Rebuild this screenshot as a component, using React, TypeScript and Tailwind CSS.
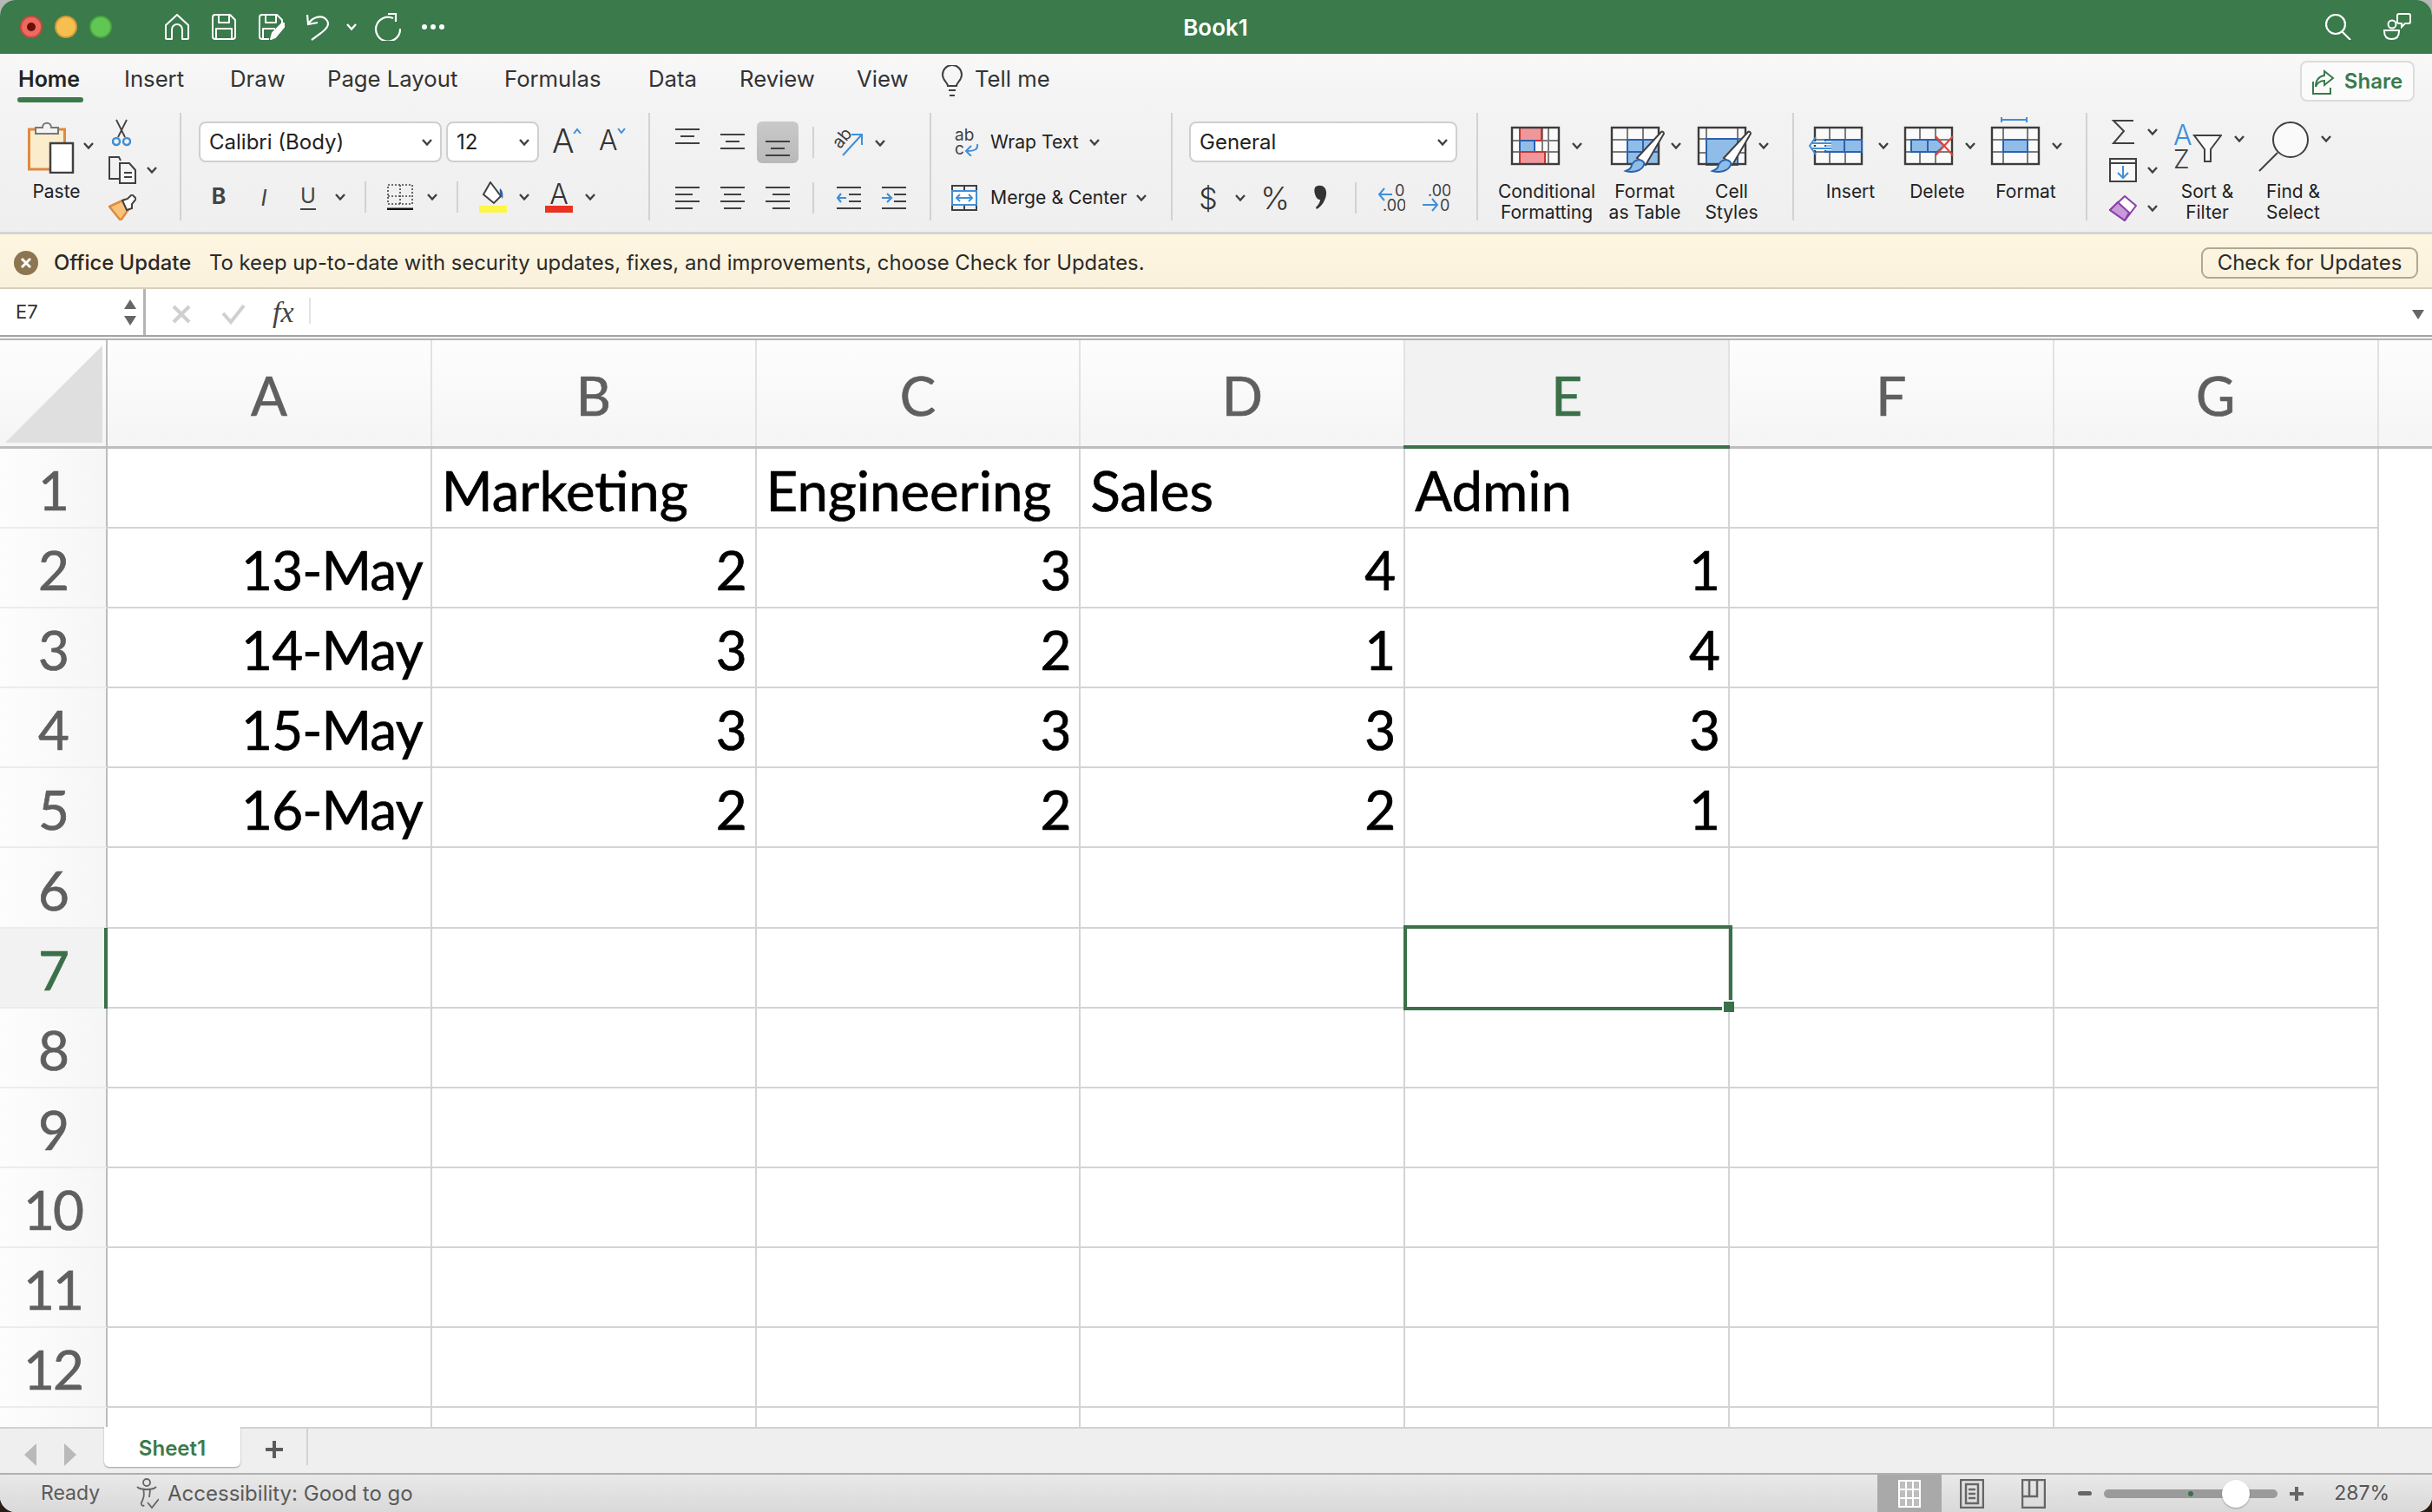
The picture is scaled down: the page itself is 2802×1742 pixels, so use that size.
import type { ReactNode } from 'react';

const INK = '#404040';
const BLUE = '#3f8fd8';
const SOFT = '#90bde8';
const DEEP = '#2a62ad';

const columns = ['A', 'B', 'C', 'D', 'E', 'F', 'G'];
const rows: (string | number)[][] = [
  ['', 'Marketing', 'Engineering', 'Sales', 'Admin', '', ''],
  ['13-May', 2, 3, 4, 1, '', ''],
  ['14-May', 3, 2, 1, 4, '', ''],
  ['15-May', 3, 3, 3, 3, '', ''],
  ['16-May', 2, 2, 2, 1, '', ''],
  ['', '', '', '', '', '', ''],
  ['', '', '', '', '', '', ''],
  ['', '', '', '', '', '', ''],
  ['', '', '', '', '', '', ''],
  ['', '', '', '', '', '', ''],
  ['', '', '', '', '', '', ''],
  ['', '', '', '', '', '', ''],
  ['', '', '', '', '', '', ''],
];

const tabs = [
  { label: 'Home', cls: 'w-[122px] text-[25px] font-semibold text-[#222]' },
  { label: 'Insert', cls: 'w-[122px]' },
  { label: 'Draw', cls: 'w-[112px]' },
  { label: 'Page Layout', cls: 'w-[204px]' },
  { label: 'Formulas', cls: 'w-[166px]' },
  { label: 'Data', cls: 'w-[105px]' },
  { label: 'Review', cls: 'w-[135px]' },
  { label: 'View', cls: 'w-[92px]' },
];

function Chev({ className = '' }: { className?: string }) {
  return (
    <svg viewBox="0 0 12 8" className={`w-[12px] h-[8px] shrink-0 ${className}`} fill="none" stroke={INK} strokeWidth="2.4">
      <path d="M1 1l5 5.5L11 1" />
    </svg>
  );
}

function Sep({ className = '' }: { className?: string }) {
  return <div className={`w-[2px] shrink-0 bg-[#d2d2d2] ${className}`} />;
}

function Lines({ widths, className = '', gap = 8 }: { widths: [number, number][]; className?: string; gap?: number }) {
  return (
    <svg viewBox={`0 0 28 ${(widths.length - 1) * gap + 2}`} className={`w-[28px] shrink-0 ${className}`} fill={INK}>
      {widths.map(([x, w], i) => (
        <rect key={i} x={x} y={i * gap} width={w} height="2" />
      ))}
    </svg>
  );
}

function Indent({ flip, className = '' }: { flip?: boolean; className?: string }) {
  return (
    <svg viewBox="0 0 28 26" className={`w-[28px] h-[26px] shrink-0 ${className}`} fill="none">
      <path d="M0 1h28M0 25h28M14 9h14M14 17h14" stroke={INK} strokeWidth="2" />
      {flip ? (
        <path d="M0 13h10M6 8l5 5-5 5" stroke={BLUE} strokeWidth="2.2" />
      ) : (
        <path d="M11 13H1M5 8l-4 5 4 5" stroke={BLUE} strokeWidth="2.2" />
      )}
    </svg>
  );
}

function Brush() {
  return (
    <g>
      <path d="M30 36L58 6c1-1 3 0 3 2L40 44z" fill="#fff" stroke={INK} strokeWidth="2" />
      <path d="M32 38c-7 1-8 6-9 9-1 2-4 3-6 4 7 2 18 1 21-7 1-2 0-5-6-6z" fill={SOFT} stroke={DEEP} strokeWidth="2" />
    </g>
  );
}

function SheetIcon({ kind }: { kind: 'cond' | 'table' | 'styles' | 'insert' | 'delete' | 'format' }) {
  const lines: Record<string, string> = {
    cond: 'M10 1v42M36 1v42M43 1v42M1 16h54M1 29h54',
    table: 'M19 1v42M37 1v42M1 15h54M1 29h54',
    styles: 'M10 1v42M46 1v42M1 14h54M1 30h54',
    insert: 'M18 1v42M36 1v42M1 15h54M1 29h54',
    delete: 'M18 1v42M36 1v42M1 15h54M1 29h54',
    format: 'M14 1v42M42 1v42M1 15h54M1 29h54',
  };
  return (
    <svg viewBox="0 0 62 54" className="w-[62px] h-[54px] shrink-0 overflow-visible" fill="none">
      <rect x="1" y="1" width="54" height="42" fill="#fafafa" />
      <path d={lines[kind]} stroke="#7c7c7c" strokeWidth="2" />
      {kind === 'cond' && (
        <g strokeWidth="2">
          <rect x="10" y="1" width="25" height="15" fill="#f1979b" stroke="#c9352b" />
          <rect x="10" y="16" width="17" height="13" fill={SOFT} stroke={DEEP} />
          <rect x="10" y="29" width="29" height="14" fill="#f1979b" stroke="#c9352b" />
        </g>
      )}
      {kind === 'table' && <path d="M19 15h36v28H19zM19 29h36M37 15v28" fill={SOFT} stroke={DEEP} strokeWidth="2" />}
      {kind === 'styles' && <rect x="10" y="14" width="36" height="30" fill={SOFT} stroke={DEEP} strokeWidth="2" />}
      {kind === 'format' && <rect x="14" y="15" width="28" height="14" fill={SOFT} stroke={DEEP} strokeWidth="2" />}
      {kind === 'format' && <path d="M12 -8h28M12 -11v6M41 -11v6" stroke={BLUE} strokeWidth="2" />}
      <rect x="1" y="1" width="54" height="42" stroke="#3c3c3c" strokeWidth="2.4" />
      {kind === 'insert' && (
        <g>
          <rect x="13" y="15" width="42" height="14" fill={SOFT} stroke={DEEP} strokeWidth="2" />
          <path d="M35 15v14" stroke={DEEP} strokeWidth="2" />
          <path d="M20 19H-2M20 25H-2" stroke="#fff" strokeWidth="4" />
          <path d="M20 19H-2M20 25H-2M2 12l-7 10 7 10" stroke={BLUE} strokeWidth="2" />
        </g>
      )}
      {kind === 'delete' && (
        <g>
          <path d="M8 15h30l8 7-8 7H8z" fill={SOFT} stroke={DEEP} strokeWidth="2" />
          <path d="M27 15v14" stroke={DEEP} strokeWidth="2" />
          <path d="M36 11l20 22M56 11L36 33" stroke="#e0473c" strokeWidth="2.2" />
        </g>
      )}
      {(kind === 'table' || kind === 'styles') && <Brush />}
    </svg>
  );
}

function BigButton({ label, icon, cls, iconGap, chevGap }: { label: ReactNode; icon: ReactNode; cls: string; iconGap: string; chevGap: string }) {
  return (
    <div className={`flex flex-col pt-[16px] shrink-0 ${cls}`}>
      <div className="flex h-[63px] shrink-0 items-start">
        <div className={iconGap}>{icon}</div>
        <Chev className={`mt-[18px] ${chevGap}`} />
      </div>
      <div className="shrink-0 text-center text-[21px] leading-[24px] text-[#222]">{label}</div>
    </div>
  );
}

function RibbonGroup({ cls, children }: { cls: string; children: ReactNode }) {
  return <div className={`shrink-0 h-full ${cls}`}>{children}</div>;
}

function TitleBar() {
  return (
    <div className="relative flex h-[62px] shrink-0 items-center bg-[#3a7a4b] text-white">
      <div className="ml-[23px] h-[26px] w-[26px] rounded-full border-2 border-[#c9483f] bg-[#ee6a5f] flex items-center justify-center">
        <div className="h-[10px] w-[10px] rounded-full bg-[#6b0f0a]" />
      </div>
      <div className="ml-[14px] h-[26px] w-[26px] rounded-full border-2 border-[#cf9b36] bg-[#f6bf4f]" />
      <div className="ml-[14px] h-[26px] w-[26px] rounded-full border-2 border-[#4aa43f] bg-[#62c655]" />
      <svg viewBox="0 0 28 30" className="ml-[61px] h-[30px] w-[28px]" fill="none" stroke="#fff" strokeWidth="2" strokeLinejoin="round">
        <path d="M1 13L14 1l13 12v15a1 1 0 0 1-1 1h-6V18a6 6 0 0 0-12 0v11H2a1 1 0 0 1-1-1z" />
      </svg>
      <svg viewBox="0 0 28 30" className="ml-[26px] h-[30px] w-[28px]" fill="none" stroke="#fff" strokeWidth="2" strokeLinejoin="round">
        <path d="M4 1h17l6 6v19a3 3 0 0 1-3 3H4a3 3 0 0 1-3-3V4a3 3 0 0 1 3-3zM8 1v9h12V1M5 29V17h18v12" />
      </svg>
      <svg viewBox="0 0 30 30" className="ml-[26px] h-[30px] w-[30px]" fill="none" stroke="#fff" strokeWidth="2" strokeLinejoin="round">
        <path d="M12 29H4a3 3 0 0 1-3-3V4a3 3 0 0 1 3-3h17l6 6v7M8 1v9h12V1M5 29V17h14" />
        <path d="M14 29l2-7 11-11c2-1 4 1 3 3L19 27z" fill="#fff" />
      </svg>
      <svg viewBox="0 0 28 32" className="ml-[24px] h-[32px] w-[28px]" fill="none" stroke="#fff" strokeWidth="2.2">
        <path d="M2 2l1 11 11-2M3 13C8 4 20 1 25 9c3 5-1 9-7 14L7 31" />
      </svg>
      <Chev className="ml-[19px] [&_path]:stroke-white" />
      <svg viewBox="0 0 32 32" className="ml-[19px] h-[32px] w-[32px]" fill="none" stroke="#fff" strokeWidth="2.2">
        <path d="M23 6A14 14 0 1 0 31 18M17 1h9v9" />
      </svg>
      <div className="ml-[24px] flex gap-[4px]">
        <div className="h-[6px] w-[6px] rounded-full bg-white" />
        <div className="h-[6px] w-[6px] rounded-full bg-white" />
        <div className="h-[6px] w-[6px] rounded-full bg-white" />
      </div>
      <div className="flex-1 pr-[390px] text-center text-[26px] font-semibold">Book1</div>
      <svg viewBox="0 0 30 30" className="h-[30px] w-[30px]" fill="none" stroke="#fff" strokeWidth="2.2">
        <circle cx="12" cy="12" r="11" />
        <path d="M19 20l10 10" />
      </svg>
      <svg viewBox="0 0 32 32" className="ml-[37px] mr-[24px] h-[32px] w-[32px]" fill="none" stroke="#fff" strokeWidth="2">
        <circle cx="10" cy="13" r="4.5" />
        <path d="M1 20h17a1 1 0 0 1 0 1c0 6-3 9-8.500 9S1 27 1 21z" />
        <path d="M18 1h11a2 2 0 0 1 2 2v7a2 2 0 0 1-2 2h-4l-4 4v-4h-3a2 2 0 0 1-2-2V3a2 2 0 0 1 2-2z" />
      </svg>
    </div>
  );
}

function TabRow() {
  return (
    <div className="flex h-[63px] shrink-0 bg-gradient-to-b from-[#f8f8f8] to-[#f3f3f3] text-[25.7px] text-[#333]">
      <div className="ml-[21px] flex pt-[14px]">
        {tabs.map((t) => (
          <div key={t.label} className={`relative leading-[30px] ${t.cls}`}>
            {t.label}
            {t.label === 'Home' && <div className="absolute left-[-1px] top-[36px] h-[6px] w-[76px] rounded-full bg-[#3a7a4b]" />}
          </div>
        ))}
      </div>
      <svg viewBox="0 0 24 40" className="ml-[6px] mt-[13px] h-[40px] w-[24px]" fill="none" stroke="#404040" strokeWidth="2">
        <path d="M7 24c0-4-6-6-6-13a11 11 0 0 1 22 0c0 7-6 9-6 13zM8 29h8M9 35h6" />
      </svg>
      <div className="ml-[14px] pt-[14px] leading-[30px]">Tell me</div>
      <div className="ml-auto mr-[20px] mt-[8px] flex h-[47px] w-[132px] items-center justify-center gap-[11px] rounded-[8px] border-2 border-[#dcdcdc] bg-[#fbfbfb] text-[24px] font-semibold text-[#3a7a4b]">
        <svg viewBox="0 0 26 30" className="h-[30px] w-[26px]" fill="none" stroke="#3a7a4b" strokeWidth="2">
          <path d="M14 3l10 8-10 8v-5c-5 0-8 2-10 7 0-8 4-12 10-13zM1 15v14h20v-7" />
        </svg>
        <span>Share</span>
      </div>
    </div>
  );
}

function SelectBox({ cls, label }: { cls: string; label: string }) {
  return (
    <div className={`flex h-[47px] items-center justify-between rounded-[8px] border-2 border-[#cfcfcf] bg-white pl-[10px] pr-[9px] text-[24px] text-[#222] shrink-0 ${cls}`}>
      <span>{label}</span>
      <Chev />
    </div>
  );
}

function Ribbon() {
  return (
    <div className="flex h-[145px] shrink-0 border-b-[3px] border-[#d4d4d4] bg-gradient-to-b from-[#f3f3f3] to-[#efefef] pt-[5px] pb-[13px]">
      {/* clipboard */}
      <RibbonGroup cls="flex w-[207px]">
        <div className="ml-[32px] flex w-[66px] flex-col items-center pt-[10px]">
          <svg viewBox="0 0 54 60" className="h-[60px] w-[54px] self-start" fill="none">
            <rect x="1.500" y="9" width="41" height="46" fill="#fbeccb" stroke="#e0893f" strokeWidth="3" />
            <path d="M9 14V7h8c0-7 10-7 10 0h8v7z" fill="#f4f4f4" stroke="#777" strokeWidth="2" />
            <rect x="26" y="25" width="26" height="34" fill="#fff" stroke="#404040" strokeWidth="2.500" />
          </svg>
          <div className="mt-[9px] text-[21px] leading-[24px] text-[#222]">Paste</div>
        </div>
        <Chev className="mt-[34px] ml-[-2px]" />
        <div className="ml-[17px] flex flex-col pt-[7px]">
          <svg viewBox="0 0 22 32" className="ml-[4px] h-[32px] w-[22px]" fill="none">
            <path d="M5 1l10 20M17 1L7 21" stroke={INK} strokeWidth="1.800" />
            <circle cx="5" cy="26" r="4" stroke={BLUE} strokeWidth="2.500" />
            <circle cx="17" cy="26" r="4" stroke={BLUE} strokeWidth="2.500" />
          </svg>
          <div className="mt-[11px] flex items-center">
            <svg viewBox="0 0 32 32" className="h-[32px] w-[32px]" fill="none" stroke={INK} strokeWidth="2">
              <path d="M12 26H1V1h11l2 4" />
              <path d="M13 8h11l7 8v15H13zM18 19h9M18 24h9" fill="#f4f4f4" />
            </svg>
            <Chev className="ml-[12px]" />
          </div>
          <svg viewBox="0 0 32 30" className="mt-[12px] h-[30px] w-[32px]" fill="none">
            <path d="M1 14L18 6l6 10-10 14z" fill="#f7c27a" stroke="#e0893f" strokeWidth="2.500" />
            <path d="M16 7l6-2 5-5 5 5-5 6 0 5-6 2z" fill="#fff" stroke={INK} strokeWidth="2" />
          </svg>
        </div>
      </RibbonGroup>
      <Sep />
      {/* font */}
      <RibbonGroup cls="flex w-[538px] flex-col pt-[10px]">
        <div className="flex items-start">
          <SelectBox cls="ml-[20px] w-[280px]" label="Calibri (Body)" />
          <SelectBox cls="ml-[5px] w-[107px]" label="12" />
          <div className="relative ml-[15px] mt-[2px] w-[30px] text-[38px] font-light leading-[40px] text-[#333]">
            A
            <svg viewBox="0 0 10 6" className="absolute left-[24px] top-[6px] h-[6px] w-[10px]" fill="none" stroke={BLUE} strokeWidth="2"><path d="M1 6l4-5 4 5" /></svg>
          </div>
          <div className="relative ml-[24px] mt-[2px] w-[30px] text-[32px] font-light leading-[40px] text-[#333]">
            A
            <svg viewBox="0 0 10 6" className="absolute left-[21px] top-[6px] h-[6px] w-[10px]" fill="none" stroke={BLUE} strokeWidth="2"><path d="M1 0l4 5 4-5" /></svg>
          </div>
        </div>
        <div className="mt-[18px] flex h-[44px] items-center">
          <div className="ml-[26px] w-[34px] text-center text-[25px] font-bold text-[#444]">B</div>
          <div className="ml-[18px] w-[34px] text-center text-[26px] italic text-[#444]">I</div>
          <div className="ml-[17px] flex w-[34px] flex-col items-center text-[24px] leading-[28px] text-[#444]">
            <span>U</span>
            <div className="h-[2px] w-[18px] bg-[#444]" />
          </div>
          <Chev className="ml-[14px]" />
          <Sep className="ml-[22px] h-[36px]" />
          <svg viewBox="0 0 30 30" className="ml-[24px] h-[30px] w-[30px]" fill="none" stroke="#444" strokeWidth="1.600" strokeDasharray="2 2">
            <path d="M1 1h28v22H1zM15 1v22M1 14h28" />
            <path d="M0 29h30" stroke="#111" strokeWidth="3" strokeDasharray="none" />
          </svg>
          <Chev className="ml-[16px]" />
          <Sep className="ml-[22px] h-[36px]" />
          <div className="ml-[24px] flex w-[32px] flex-col items-center">
            <svg viewBox="0 0 28 28" className="h-[28px] w-[28px]" fill="none">
              <path d="M11 1l12 16-8 8L3 15z" stroke={INK} strokeWidth="2" fill="#fff" />
              <path d="M22 8c3 2 4 7 3 12-2-3-4-7-3-12z" fill={DEEP} />
            </svg>
            <div className="h-[8px] w-[32px] bg-[#fdf54a]" />
          </div>
          <Chev className="ml-[14px]" />
          <div className="ml-[18px] flex w-[32px] flex-col items-center">
            <div className="h-[28px] text-[32px] font-light leading-[30px] text-[#333]">A</div>
            <div className="h-[8px] w-[32px] bg-[#e93323]" />
          </div>
          <Chev className="ml-[14px]" />
        </div>
      </RibbonGroup>
      <Sep />
      {/* alignment */}
      <RibbonGroup cls="flex w-[322px] flex-col pt-[10px]">
        <div className="flex h-[48px] items-start">
          <Lines widths={[[0, 28], [6, 16], [0, 28]]} className="ml-[29px] mt-[8px] h-[18px]" />
          <Lines widths={[[0, 28], [6, 16], [0, 28]]} className="ml-[24px] mt-[14px] h-[18px]" />
          <div className="ml-[14px] flex h-[48px] w-[48px] items-end justify-center rounded-[6px] bg-gradient-to-b from-[#c9c9c9] to-[#b9b9b9] pb-[8px]">
            <Lines widths={[[0, 28], [6, 16], [0, 28]]} className="h-[18px]" />
          </div>
          <Sep className="ml-[16px] mt-[6px] h-[36px]" />
          <svg viewBox="0 0 34 32" className="ml-[23px] mt-[8px] h-[32px] w-[34px]" fill="none">
            <text x="0" y="18" fontSize="20" fontFamily="Inter, sans-serif" fill={INK} transform="rotate(-50 10 14)">ab</text>
            <path d="M10 31L32 7M20 7h12v12" stroke={BLUE} strokeWidth="2" />
          </svg>
          <Chev className="ml-[13px] mt-[21px]" />
        </div>
        <div className="mt-[18px] flex h-[44px] items-center">
          <Lines widths={[[0, 28], [0, 20], [0, 28], [0, 20]]} className="ml-[29px] h-[26px]" />
          <Lines widths={[[0, 28], [4, 20], [0, 28], [4, 20]]} className="ml-[24px] h-[26px]" />
          <Lines widths={[[0, 28], [8, 20], [0, 28], [8, 20]]} className="ml-[24px] h-[26px]" />
          <Sep className="ml-[26px] h-[36px]" />
          <Indent className="ml-[26px]" />
          <Indent flip className="ml-[24px]" />
        </div>
      </RibbonGroup>
      <Sep />
      {/* wrap and merge */}
      <RibbonGroup cls="flex w-[276px] flex-col pt-[10px] text-[21.200px] text-[#222]">
        <div className="flex h-[48px] items-center">
          <svg viewBox="0 0 28 32" className="ml-[27px] h-[32px] w-[28px]" fill="none">
            <text x="0" y="14" fontSize="19" fontFamily="Inter, sans-serif" fill={INK}>ab</text>
            <text x="0" y="30" fontSize="19" fontFamily="Inter, sans-serif" fill={INK}>c</text>
            <path d="M26 18c1 6-3 8-12 8M19 20l-6 6 6 6" stroke={BLUE} strokeWidth="2" />
          </svg>
          <span className="ml-[13px]">Wrap Text</span>
          <Chev className="ml-[12px]" />
        </div>
        <div className="mt-[18px] flex h-[44px] items-center">
          <svg viewBox="0 0 30 30" className="ml-[23px] h-[30px] w-[30px]" fill="none">
            <path d="M1 1h28v28H1zM15 1v6M15 23v6" stroke={INK} strokeWidth="2" />
            <rect x="1" y="7" width="28" height="16" fill="#fff" stroke={BLUE} strokeWidth="2" />
            <path d="M6 15h18M10 11l-4 4 4 4M20 11l4 4-4 4" stroke={BLUE} strokeWidth="2" />
          </svg>
          <span className="ml-[15px]">Merge &amp; Center</span>
          <Chev className="ml-[11px]" />
        </div>
      </RibbonGroup>
      <Sep />
      {/* number */}
      <RibbonGroup cls="flex w-[350px] flex-col pt-[10px]">
        <SelectBox cls="ml-[19px] w-[309px]" label="General" />
        <div className="mt-[19px] flex h-[44px] items-center text-[#333]">
          <div className="ml-[27px] w-[28px] text-center text-[34px] font-light">$</div>
          <Chev className="ml-[17px]" />
          <div className="ml-[16px] w-[36px] text-center text-[36px] font-light">%</div>
          <svg viewBox="0 0 20 30" className="ml-[25px] h-[30px] w-[20px]" fill="#333">
            <path d="M4 2c5-3 13-1 12 9-1 8-6 14-11 17l-1-2c3-3 5-6 5-9C4 18 0 5 4 2z" />
          </svg>
          <Sep className="ml-[29px] h-[36px]" />
          <svg viewBox="0 0 32 32" className="ml-[24px] h-[32px] w-[32px]" fill="none">
            <text x="20" y="14" fontSize="18" fontFamily="Inter, sans-serif" fill={INK}>0</text>
            <text x="6" y="31" fontSize="18" fontFamily="Inter, sans-serif" fill={INK}>.00</text>
            <path d="M17 12H2M8 5l-6 7 6 7" stroke={BLUE} strokeWidth="2" />
          </svg>
          <svg viewBox="0 0 32 32" className="ml-[20px] h-[32px] w-[32px]" fill="none">
            <text x="6" y="14" fontSize="18" fontFamily="Inter, sans-serif" fill={INK}>.00</text>
            <text x="20" y="31" fontSize="18" fontFamily="Inter, sans-serif" fill={INK}>0</text>
            <path d="M0 24h17M11 17l6 7-6 7" stroke={BLUE} strokeWidth="2" />
          </svg>
        </div>
      </RibbonGroup>
      <Sep />
      {/* styles */}
      <RibbonGroup cls="flex w-[362px]">
        <BigButton cls="ml-[19px] w-[120px]" iconGap="ml-[19px] w-[56px]" chevGap="ml-[14px]" icon={<SheetIcon kind="cond" />} label={<>Conditional<br />Formatting</>} />
        <BigButton cls="ml-[3px] w-[100px]" iconGap="ml-[11px] w-[62px]" chevGap="ml-[7px]" icon={<SheetIcon kind="table" />} label={<>Format<br />as Table</>} />
        <BigButton cls="w-[100px]" iconGap="ml-[11px] w-[62px]" chevGap="ml-[8px]" icon={<SheetIcon kind="styles" />} label={<>Cell<br />Styles</>} />
      </RibbonGroup>
      <Sep />
      {/* cells */}
      <RibbonGroup cls="flex w-[336px]">
        <BigButton cls="ml-[15px] w-[100px]" iconGap="ml-[8px] w-[62px]" chevGap="ml-[12px]" icon={<SheetIcon kind="insert" />} label="Insert" />
        <BigButton cls="w-[100px]" iconGap="ml-[12px] w-[60px]" chevGap="ml-[10px]" icon={<SheetIcon kind="delete" />} label="Delete" />
        <BigButton cls="ml-[2px] w-[100px]" iconGap="ml-[10px] w-[56px]" chevGap="ml-[14px]" icon={<SheetIcon kind="format" />} label="Format" />
      </RibbonGroup>
      <Sep />
      {/* editing */}
      <RibbonGroup cls="flex flex-1">
        <div className="ml-[25px] flex w-[56px] flex-col pt-[8px]">
          <div className="flex h-[28px] items-center">
            <svg viewBox="0 0 32 28" className="h-[28px] w-[32px]" fill="none" stroke={INK} strokeWidth="2">
              <path d="M28 1H5l12 12L5 27h24" />
            </svg>
            <Chev className="ml-[12px]" />
          </div>
          <div className="mt-[16px] flex h-[28px] items-center">
            <svg viewBox="0 0 32 28" className="h-[28px] w-[32px]" fill="#fafafa" stroke={INK} strokeWidth="2">
              <rect x="1" y="1" width="30" height="26" />
              <path d="M1 6h30" />
              <path d="M16 9v14M10 17l6 6 6-6" stroke={BLUE} fill="none" />
            </svg>
            <Chev className="ml-[12px]" />
          </div>
          <div className="mt-[15px] flex h-[30px] items-center">
            <svg viewBox="0 0 32 30" className="h-[30px] w-[32px]" fill="none" stroke="#8b3fa8" strokeWidth="2">
              <path d="M18 1l13 11-13 17L1 17z" fill="#fff" />
              <path d="M10 8l13 12-5 9L1 17z" fill="#c79ad9" />
            </svg>
            <Chev className="ml-[12px]" />
          </div>
        </div>
        <div className="ml-[12px] flex w-[90px] flex-col pt-[12px]">
          <div className="flex h-[67px] shrink-0 items-start">
            <svg viewBox="0 0 56 53" className="ml-[6px] h-[53px] w-[56px]" fill="none">
              <text x="0" y="25" fontSize="32" fontFamily="Inter, sans-serif" fontWeight="300" fill={BLUE}>A</text>
              <text x="0" y="52" fontSize="30" fontFamily="Inter, sans-serif" fontWeight="300" fill={INK}>Z</text>
              <path d="M24 14h31L43 30v14h-7V30z" stroke={INK} strokeWidth="2" fill="#fafafa" />
            </svg>
            <Chev className="ml-[14px] mt-[14px]" />
          </div>
          <div className="shrink-0 text-center text-[21px] leading-[24px] text-[#222]">Sort &amp;<br />Filter</div>
        </div>
        <div className="ml-[4px] flex w-[100px] flex-col pt-[10px]">
          <div className="flex h-[69px] shrink-0 items-start">
            <svg viewBox="0 0 58 58" className="ml-[10px] h-[58px] w-[58px]" fill="none" stroke={INK} strokeWidth="2">
              <ellipse cx="37" cy="21" rx="20" ry="20" fill="#fafafa" />
              <path d="M22 36L1 57" />
            </svg>
            <Chev className="ml-[14px] mt-[16px]" />
          </div>
          <div className="shrink-0 text-center text-[21px] leading-[24px] text-[#222]">Find &amp;<br />Select</div>
        </div>
      </RibbonGroup>
    </div>
  );
}

function UpdateBar() {
  return (
    <div className="flex h-[63px] shrink-0 items-center border-b-2 border-[#d8d0bc] bg-gradient-to-b from-[#fef6e1] to-[#faf1dc] pt-[4px] text-[23.850px] text-[#2a2a2a]">
      <div className="ml-[16px] flex h-[28px] w-[28px] items-center justify-center rounded-full bg-[#8c7550]">
        <svg viewBox="0 0 14 14" className="h-[14px] w-[14px]" fill="none" stroke="#fff" strokeWidth="3"><path d="M2 2l10 10M12 2L2 12" /></svg>
      </div>
      <div className="ml-[18px] w-[179px] font-medium">Office Update</div>
      <div>To keep up-to-date with security updates, fixes, and improvements, choose Check for Updates.</div>
      <div className="ml-auto mr-[16px] flex h-[36px] w-[250px] items-center justify-center rounded-[9px] border-2 border-[#b0a794] text-[24px]">Check for Updates</div>
    </div>
  );
}

function FormulaBar() {
  return (
    <div className="flex shrink-0 flex-col">
      <div className="flex h-[53px] bg-white">
        <div className="flex w-[168px] items-center justify-between border-r-[3px] border-[#b4b4b4] pl-[18px] pr-[8px] text-[22px] text-[#333]">
          <span>E7</span>
          <div className="flex flex-col gap-[8px]">
            <div className="h-0 w-0 border-x-[7px] border-b-[11px] border-x-transparent border-b-[#666]" />
            <div className="h-0 w-0 border-x-[7px] border-t-[11px] border-x-transparent border-t-[#666]" />
          </div>
        </div>
        <svg viewBox="0 0 22 22" className="ml-[30px] mt-[18px] h-[22px] w-[22px]" fill="none" stroke="#cfcfcf" strokeWidth="4"><path d="M2 2l18 18M20 2L2 20" /></svg>
        <svg viewBox="0 0 28 24" className="ml-[35px] mt-[17px] h-[24px] w-[28px]" fill="none" stroke="#cfcfcf" strokeWidth="4"><path d="M2 11l9 10L26 2" /></svg>
        <div className="ml-[31px] w-[28px] pt-[9px] font-['Liberation_Serif',serif] text-[34px] italic leading-[36px] text-[#444]">fx</div>
        <div className="ml-[14px] mt-[10px] h-[30px] w-[2px] bg-[#e2e2e2]" />
        <div className="ml-auto mr-[9px] mt-[24px] h-0 w-0 border-x-[7px] border-t-[11px] border-x-transparent border-t-[#666]" />
      </div>
      <div className="h-[2px] bg-[#a4a4a4]" />
      <div className="h-[2px] bg-[#f2f2f2]" />
      <div className="h-[2px] bg-[#b4b4b4]" />
    </div>
  );
}

function Grid() {
  return (
    <div className="relative h-[1252px] shrink-0 overflow-hidden bg-white font-['Lato',sans-serif] text-[62px] [-webkit-text-stroke:0.7px]">
      <div className="flex h-[125px] border-b-[3px] border-[#bdbdbd] bg-gradient-to-b from-[#fdfdfd] to-[#f5f5f5] pt-[4px] text-[#5f5f5f]">
        <div className="-mt-[4px] flex h-[122px] w-[124px] shrink-0 items-end border-r-2 border-[#bdbdbd] pb-[4px] pl-[6px]">
          <svg viewBox="0 0 112 112" className="h-[112px] w-[112px]"><path d="M112 0v112H0z" fill="#dfdfdf" /></svg>
        </div>
        {columns.map((c) => (
          <div
            key={c}
            className={`-mt-[4px] flex h-[122px] w-[373.8px] shrink-0 items-center justify-center border-r-2 border-[#e2e2e2] pt-[4px] ${c === 'E' ? 'relative bg-[#f2f2f2] text-[#3a7149]' : ''}`}
          >
            {c}
            {c === 'E' && <div className="absolute -bottom-[3px] -left-[2px] -right-[2px] h-[4px] bg-[#3a7149]" />}
          </div>
        ))}
      </div>
      {rows.map((row, r) => (
        <div key={r} className="flex h-[92.1px]">
          <div
            className={`flex w-[124px] shrink-0 items-center justify-center border-b-2 border-r-2 border-[#ececec] border-r-[#bdbdbd] pt-[5px] tracking-[-2px] ${
              r === 6 ? 'relative bg-[#f2f2f2] text-[#3a7149]' : 'bg-gradient-to-r from-[#fdfdfd] to-[#f6f6f6] text-[#5f5f5f]'
            }`}
          >
            {r < 12 ? r + 1 : ''}
            {r === 6 && <div className="absolute -right-[2px] -top-px -bottom-[2px] w-[4px] bg-[#3a7149]" />}
          </div>
          {row.map((v, c) => {
            const isHeading = typeof v === 'string' && r === 0;
            const isDate = typeof v === 'string' && r > 0;
            return (
              <div
                key={c}
                className={`flex h-full w-[373.8px] shrink-0 items-center overflow-visible whitespace-nowrap border-b-2 border-r-2 border-[#d4d4d4] pl-[11px] pr-[9px] pt-[5px] text-black ${
                  isHeading ? 'justify-start text-[63.5px]' : 'justify-end'
                } ${isDate ? 'tracking-[-0.8px]' : ''}`}
              >
                {v}
              </div>
            );
          })}
        </div>
      ))}
      <div className="absolute left-[1617px] top-[674px] h-[98px] w-[379px] border-4 border-[#3a7149]">
        <div className="absolute -bottom-[6px] -right-[6px] h-[12px] w-[12px] border-l-2 border-t-2 border-white bg-[#3a7149] box-content" />
      </div>
    </div>
  );
}

function SheetTabs() {
  return (
    <div className="flex h-[53px] shrink-0 items-start border-t-2 border-[#d2d2d2] bg-[#efefef]">
      <div className="ml-[28px] mt-[17px] h-0 w-0 border-y-[13px] border-r-[14px] border-y-transparent border-r-[#b9b9b9]" />
      <div className="ml-[32px] mt-[17px] h-0 w-0 border-y-[13px] border-l-[14px] border-y-transparent border-l-[#b9b9b9]" />
      <div className="ml-[32px] -mt-[2px] flex h-[46px] w-[157px] items-center justify-center rounded-b-[6px] bg-white pt-[4px] text-[24px] font-semibold text-[#3a7a4b] shadow-[0_1px_2px_rgba(0,0,0,0.35)]">
        Sheet1
      </div>
      <svg viewBox="0 0 20 20" className="ml-[29px] mt-[14px] h-[20px] w-[20px]" fill="none" stroke="#5c5c5c" strokeWidth="4"><path d="M10 0v20M0 10h20" /></svg>
      <div className="ml-[27px] h-[42px] w-[2px] bg-[#d2d2d2]" />
    </div>
  );
}

function StatusBar() {
  return (
    <div className="flex h-[45px] shrink-0 items-center border-t-2 border-[#b0b0b0] bg-gradient-to-b from-[#e9e9e9] to-[#d9d9d9] text-[23px] text-[#5a5a5a]">
      <div className="ml-[47px] w-[110px]">Ready</div>
      <svg viewBox="0 0 26 36" className="h-[36px] w-[26px]" fill="none" stroke="#666" strokeWidth="1.800">
        <circle cx="12" cy="5" r="4" />
        <path d="M1 10c4 4 18 4 22 0M8 12c2 8 0 12-2 16-1 3 2 5 3 3M16 12c0 5-1 8-1 10M13 28l5 6 8-10" />
      </svg>
      <div className="ml-[10px] text-[24px]">Accessibility: Good to go</div>
      <div className="ml-auto flex h-full w-[74px] items-center justify-center bg-[#a9a9a9]">
        <svg viewBox="0 0 26 32" className="h-[32px] w-[26px]" fill="#bdbdbd" stroke="#fff" strokeWidth="2">
          <path d="M1 1h24v30H1zM9 1v30M17 1v30M1 11h24M1 21h24" />
        </svg>
      </div>
      <svg viewBox="0 0 28 34" className="ml-[21px] h-[34px] w-[28px]" fill="none" stroke="#666" strokeWidth="2.500">
        <path d="M1 1h26v32H1zM7 6h14v22H7zM10 12h8M10 17h8M10 22h8" />
      </svg>
      <svg viewBox="0 0 28 34" className="ml-[43px] h-[34px] w-[28px]" fill="none" stroke="#666" strokeWidth="2.500">
        <path d="M1 1h26v32H1zM1 20h17V1M9 1v19" />
      </svg>
      <div className="ml-[37px] h-[5px] w-[16px] rounded-full bg-[#666]" />
      <div className="relative ml-[14px] h-[10px] w-[200px] rounded-full bg-[#9a9a9a]">
        <div className="absolute left-[97px] top-[2px] h-[6px] w-[6px] rounded-full bg-[#3a7149]" />
        <div className="absolute left-[136px] top-[-11px] h-[32px] w-[32px] rounded-full bg-white shadow-[0_1px_2px_rgba(0,0,0,0.3)]" />
      </div>
      <svg viewBox="0 0 16 16" className="ml-[14px] h-[16px] w-[16px]" fill="none" stroke="#666" strokeWidth="4"><path d="M8 0v16M0 8h16" /></svg>
      <div className="ml-[35px] mr-[49px] text-[#555]">287%</div>
    </div>
  );
}

export default function App() {
  return (
    <div className="h-[1742px] w-[2802px] overflow-hidden bg-gradient-to-b from-[#b8b8b8] via-[#6a6a6a] to-[#2a1e14]">
      <div className="flex h-full flex-col overflow-hidden rounded-[18px] bg-white font-['Inter',sans-serif]">
        <TitleBar />
        <TabRow />
        <Ribbon />
        <UpdateBar />
        <FormulaBar />
        <Grid />
        <SheetTabs />
        <StatusBar />
      </div>
    </div>
  );
}
